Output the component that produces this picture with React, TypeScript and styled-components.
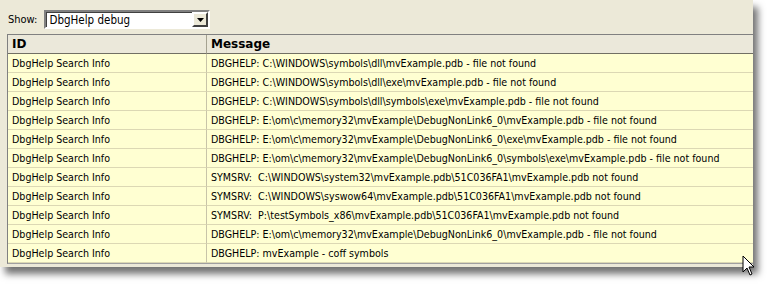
import styled, { createGlobalStyle } from "styled-components";

const Global = createGlobalStyle`
  body {
    margin: 0;
    background: #ffffff;
    font-family: "DejaVu Sans Condensed", "DejaVu Sans", sans-serif;
  }
`;

const rows: [string, string][] = [
  ["DbgHelp Search Info", "DBGHELP: C:\\WINDOWS\\symbols\\dll\\mvExample.pdb - file not found"],
  ["DbgHelp Search Info", "DBGHELP: C:\\WINDOWS\\symbols\\dll\\exe\\mvExample.pdb - file not found"],
  ["DbgHelp Search Info", "DBGHELP: C:\\WINDOWS\\symbols\\dll\\symbols\\exe\\mvExample.pdb - file not found"],
  ["DbgHelp Search Info", "DBGHELP: E:\\om\\c\\memory32\\mvExample\\DebugNonLink6_0\\mvExample.pdb - file not found"],
  ["DbgHelp Search Info", "DBGHELP: E:\\om\\c\\memory32\\mvExample\\DebugNonLink6_0\\exe\\mvExample.pdb - file not found"],
  ["DbgHelp Search Info", "DBGHELP: E:\\om\\c\\memory32\\mvExample\\DebugNonLink6_0\\symbols\\exe\\mvExample.pdb - file not found"],
  ["DbgHelp Search Info", "SYMSRV:  C:\\WINDOWS\\system32\\mvExample.pdb\\51C036FA1\\mvExample.pdb not found"],
  ["DbgHelp Search Info", "SYMSRV:  C:\\WINDOWS\\syswow64\\mvExample.pdb\\51C036FA1\\mvExample.pdb not found"],
  ["DbgHelp Search Info", "SYMSRV:  P:\\testSymbols_x86\\mvExample.pdb\\51C036FA1\\mvExample.pdb not found"],
  ["DbgHelp Search Info", "DBGHELP: E:\\om\\c\\memory32\\mvExample\\DebugNonLink6_0\\mvExample.pdb - file not found"],
  ["DbgHelp Search Info", "DBGHELP: mvExample - coff symbols"],
];

const Page = styled.div`
  position: relative;
  width: 767px;
  height: 290px;
`;

const Window = styled.div`
  width: 746px;
  height: 257px;
  background: #ece9d8;
  padding: 10px 0 0 7px;
  box-shadow: 5px 7px 7px rgba(0, 0, 0, 0.55);
  display: flex;
  flex-direction: column;
`;

const Toolbar = styled.div`
  display: flex;
  align-items: center;
  gap: 7px;
  height: 19px;
  padding-left: 1px;
`;

const Label = styled.span`
  font-size: 11px;
  color: #000;
`;

const Select = styled.div`
  width: 159px;
  height: 15px;
  background: #fff;
  border: 2px solid;
  border-color: #808080 #fff #fff #808080;
  box-shadow: inset 1px 1px 0 #404040;
  display: flex;
  align-items: center;
  justify-content: space-between;
  padding-left: 3px;
  font-size: 11.5px;
`;

const DropButton = styled.div`
  width: 16px;
  height: 15px;
  background: #ece9d8;
  border: 2px solid;
  border-color: #fff #404040 #404040 #fff;
  box-sizing: border-box;
  display: flex;
  align-items: center;
  justify-content: center;
`;

const Grid = styled.div`
  margin-top: 5px;
  width: 745px;
  border-top: 1px solid #808080;
  border-left: 1px solid #808080;
  border-bottom: 1px solid #a0a0a0;
  display: grid;
  grid-template-columns: 199px 1fr;
`;

const Head = styled.div<{ last?: boolean }>`
  height: 18px;
  background: #ebe8da;
  border-bottom: 1px solid #716f64;
  border-right: ${(p) => (p.last ? "none" : "1px solid #a5a291")};
  padding-left: 4px;
  font-family: "DejaVu Sans", sans-serif;
  font-size: 12px;
  font-weight: bold;
  line-height: 19px;
  color: #000;
`;

const Cell = styled.div<{ last?: boolean }>`
  height: 18px;
  background: #ffffd2;
  border-bottom: 1px solid #dcd8b4;
  border-right: ${(p) => (p.last ? "none" : "1px solid #c8c4a8")};
  padding-left: 4px;
  font-size: 10.6px;
  line-height: 19px;
  white-space: pre;
  overflow: hidden;
  color: #000;
`;

const Cursor = styled.svg`
  position: absolute;
  left: 742px;
  top: 255px;
`;

export default function App() {
  return (
    <Page>
      <Global />
      <Window>
        <Toolbar>
          <Label>Show:</Label>
          <Select>
            <span>DbgHelp debug</span>
            <DropButton>
              <svg width="7" height="4" viewBox="0 0 7 4">
                <path d="M0 0h7L3.5 4z" fill="#000" />
              </svg>
            </DropButton>
          </Select>
        </Toolbar>
        <Grid>
          <Head>ID</Head>
          <Head last>Message</Head>
          {rows.map(([id, msg], i) => (
            <>
              <Cell key={"a" + i}>{id}</Cell>
              <Cell key={"b" + i} last>
                {msg}
              </Cell>
            </>
          ))}
        </Grid>
      </Window>
      <Cursor width="14" height="22" viewBox="0 0 14 22">
        <path
          d="M1 1v16l4-4 3 7 2-1-3-7h5z"
          fill="#fff"
          stroke="#000"
          strokeWidth="1"
          strokeLinejoin="miter"
        />
      </Cursor>
    </Page>
  );
}
